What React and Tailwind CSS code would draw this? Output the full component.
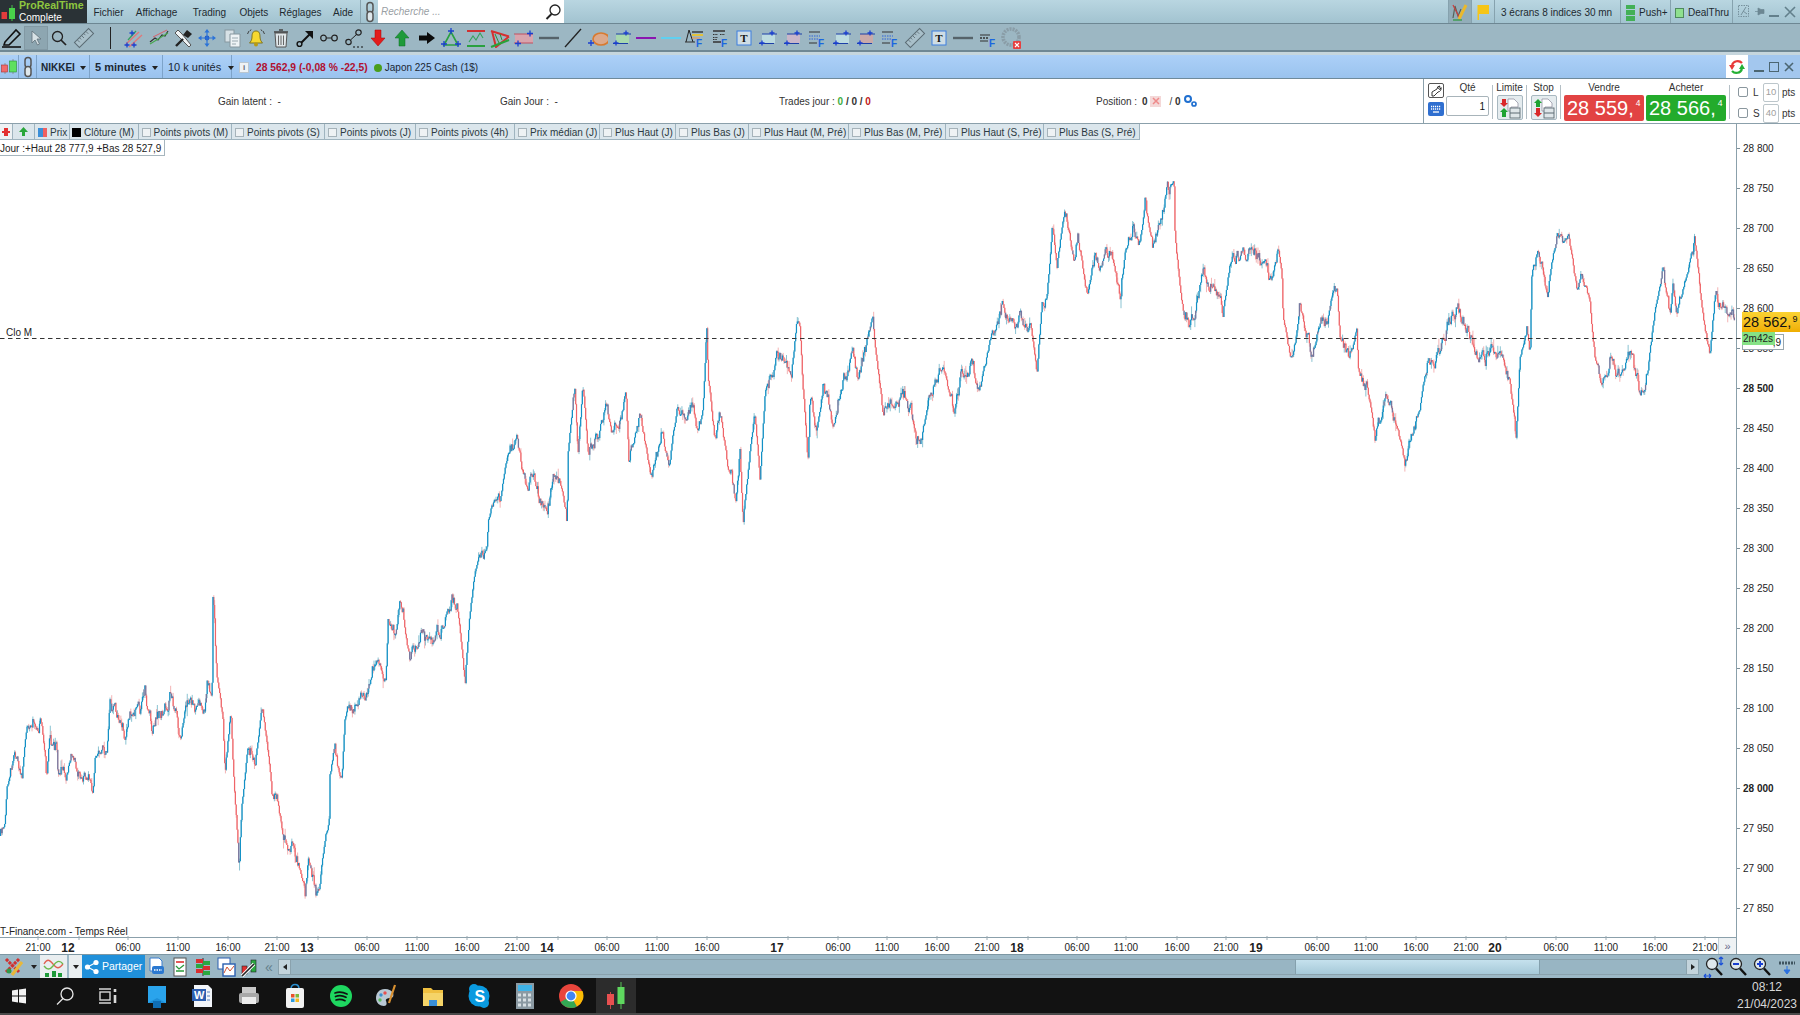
import React from "react";

const TRACE = [[0,837],[5,820],[7,790],[17,753],[22,770],[27,730],[35,720],[41,720],[45,750],[47,773],[50,747],[57,750],[58,768],[68,768],[73,753],[80,772],[88,770],[93,797],[95,760],[107,750],[110,703],[120,717],[124,732],[133,713],[140,717],[145,695],[152,730],[163,710],[170,697],[180,733],[188,700],[197,713],[205,707],[207,683],[212,703],[213,598],[217,680],[223,720],[225,773],[231,713],[233,767],[239,857],[242,807],[248,747],[255,760],[262,708],[268,750],[272,797],[278,803],[283,837],[297,857],[305,898],[308,867],[318,902],[325,840],[330,817],[328.5,787],[335,750],[342,783],[345,723],[348,702],[358,705],[368,697],[373,673],[380,660],[386,685],[388,623],[397,637],[400,613],[403,613],[410,663],[420,630],[430,652],[443,623],[452,600],[457,605],[463,657],[465,678],[470,613],[477,563],[487,547],[488.5,520],[500,500],[510,447],[517,440],[527,480],[533,470],[538,502],[547,507],[557,472],[566,510],[567,530],[568,453],[575,387],[578,453],[583,383],[588,453],[600,433],[606,407],[613,442],[626,393],[629,467],[640,415],[650,470],[655,473],[662,432],[669,470],[678,400],[687,423],[692,400],[698,440],[703,407],[707,320],[708,378],[715,440],[720,413],[728,470],[736,500],[740,450],[743,525],[750,453],[755,413],[760,477],[765,393],[768,377],[777,360],[792,365],[798,312],[800,327],[803,390],[808,457],[810,397],[816,433],[823,390],[833,418],[843,380],[853,357],[858,377],[868,347],[873,330],[880,387],[883,415],[895,397],[907,398],[920,442],[928,407],[942,362],[953,410],[960,383],[973,367],[978,402],[992,333],[1003,303],[1010,323],[1030,320],[1037,373],[1042,303],[1047,297],[1052,233],[1057,267],[1065,210],[1075,267],[1078,232],[1086,298],[1095,255],[1102,273],[1110,250],[1120,290],[1125,257],[1133,225],[1140,243],[1145,203],[1153,250],[1167,197],[1174,183],[1175,233],[1178,267],[1183,310],[1190,322],[1200,287],[1203,272],[1210,298],[1213,280],[1217,302],[1223,313],[1228,277],[1237,255],[1255,255],[1272,285],[1278,247],[1282,280],[1283,317],[1292,367],[1300,312],[1313,357],[1318,327],[1328,320],[1337,287],[1340,337],[1348,357],[1357,333],[1358,373],[1367,387],[1375,437],[1387,395],[1397,427],[1405,467],[1420,407],[1427,370],[1440,350],[1448,323],[1457,310],[1467,327],[1477,360],[1485,367],[1488,348],[1500,360],[1510,383],[1516,438],[1520,360],[1527,327],[1530,357],[1532,270],[1537,255],[1548,290],[1557,235],[1563,250],[1568,235],[1577,290],[1583,277],[1590,307],[1595,357],[1602,382],[1610,353],[1620,377],[1628,353],[1640,393],[1648,370],[1655,313],[1663,272],[1670,317],[1673,283],[1677,317],[1695,240],[1702,310],[1710,358],[1715,297],[1720,307],[1726,300],[1729,318],[1735,318]];

function buildCandles() {
  let seed = 12345;
  const rnd = () => {
    seed = (seed * 16807) % 2147483647;
    return seed / 2147483647;
  };
  const at = (x) => {
    for (let i = 1; i < TRACE.length; i++) {
      if (x <= TRACE[i][0]) {
        const [x0, y0] = TRACE[i - 1];
        const [x1, y1] = TRACE[i];
        return y0 + ((y1 - y0) * (x - x0)) / (x1 - x0 || 1);
      }
    }
    return TRACE[TRACE.length - 1][1];
  };
  let up = "", down = "", mix = "", upW = "", downW = "";
  let prev = at(0);
  let n = 0;
  for (let x = 0.5; x < 1735; x += 0.83) {
    n = n * 0.7 + (rnd() - 0.5) * 13;
    const slope = Math.abs(at(x + 3) - at(x - 3)) / 6;
    const damp = slope > 4 ? 0.4 : 1;
    const c = at(x) + n * damp;
    const o = prev;
    const top = Math.min(o, c);
    const bot = Math.max(o, c);
    const spread = slope > 4 ? 4 : 12;
    const hi = top - rnd() * rnd() * rnd() * spread;
    const lo = bot + rnd() * rnd() * rnd() * spread;
    const isUp = c <= o;
    const X = x.toFixed(2);
    const body = `M${X} ${top.toFixed(1)}V${Math.max(bot, top + 1.5).toFixed(1)}`;
    const wick = `M${X} ${hi.toFixed(1)}V${lo.toFixed(1)}`;
    const roll = rnd();
    if (roll < 0.24 && slope < 4) mix += body;
    else if (isUp) up += body;
    else down += body;
    if (isUp) upW += wick; else downW += wick;
    prev = c;
  }
  return { up, down, mix, upW, downW };
}
const C = buildCandles();

const TIMES = [["21:00",38],["12",68,1],["06:00",128],["11:00",178],["16:00",228],["21:00",277],["13",307,1],["06:00",367],["11:00",417],["16:00",467],["21:00",517],["14",547,1],["06:00",607],["11:00",657],["16:00",707],["17",777,1],["06:00",838],["11:00",887],["16:00",937],["21:00",987],["18",1017,1],["06:00",1077],["11:00",1126],["16:00",1177],["21:00",1226],["19",1256,1],["06:00",1317],["11:00",1366],["16:00",1416],["21:00",1466],["20",1495,1],["06:00",1556],["11:00",1606],["16:00",1655],["21:00",1705]];

const PRICES = Array.from({ length: 20 }, (_, i) => 28800 - i * 50);

const S = ({ w = 20, h = 20, children, className = "" }) => (
  <svg viewBox={`0 0 ${w} ${h}`} width={w} height={h} className={`block shrink-0 ${className}`}>{children}</svg>
);
const Plus = ({ x, y, c = "#1a3fd0", r = 3 }) => (
  <path d={`M${x - r} ${y}H${x + r}M${x} ${y - r}V${y + r}`} stroke={c} strokeWidth="1.3" fill="none" />
);
const Chain = () => (
  <S w={12} h={22}>
    <rect x="3" y="1.5" width="6" height="10" rx="3" fill="none" stroke="#555" strokeWidth="1.5" />
    <rect x="3" y="10.5" width="6" height="10" rx="3" fill="#dfe8ec" stroke="#555" strokeWidth="1.5" />
  </S>
);
const RectPlus = ({ fill }) => (
  <S>
    <rect x="4" y="6" width="13" height="9" fill={fill} />
    <path d="M1 15.5H16M4 6H19" stroke="#1c3fa8" strokeWidth="1" />
    <Plus x={14} y={5} r={2.5} />
    <Plus x={4} y={15} r={2.5} />
  </S>
);
const FibF = ({ children }) => (
  <S>
    {children}
    <text x="11" y="19" fontSize="10" fontWeight="700" fill="#1a66e0" fontFamily="Liberation Sans">F</text>
  </S>
);
const BoxT = () => (
  <S>
    <rect x="3" y="3" width="14" height="14" fill="#cfdde4" stroke="#3d7fe0" strokeWidth="1" />
    <text x="6.3" y="14" fontSize="11" fontWeight="700" fill="#111" fontFamily="Liberation Serif">T</text>
  </S>
);
const Line = ({ c, w = 2 }) => (
  <S>
    <path d="M0 10H20" stroke={c} strokeWidth={w} />
  </S>
);
const Ruler = () => (
  <S w={22} h={22}>
    <g transform="rotate(-45 11 11)">
      <rect x="1" y="7.5" width="20" height="7" fill="#a9c0ca" stroke="#5b6c74" strokeWidth="1" />
      <path d="M5 8v3M8 8v2M11 8v3M14 8v2M17 8v3" stroke="#5b6c74" strokeWidth=".8" />
    </g>
  </S>
);

const TOOLS = [
  <S><path d="M2 16L15 4M5 19L18 7" stroke="#e0787a" strokeWidth="1.4" /><path d="M4 12L12 3" stroke="#35a060" strokeWidth="1.3" /><Plus x={8} y={5} r={2.5} /><Plus x={3} y={17} r={2.5} /><Plus x={10} y={17} r={2.5} /></S>,
  <S><path d="M1 14L6 10L9 12L13 7L16 8L19 3" stroke="#333" strokeWidth="1.2" fill="none" /><path d="M1 16L19 5" stroke="#47a84f" strokeWidth="1.2" /><path d="M4 9L18 2" stroke="#d8606a" strokeWidth="1" /></S>,
  <S><path d="M5 2L9 6L18 17L16 19L6 9L2 5Z" fill="#eef3f5" stroke="#555" strokeWidth="1" /><path d="M10 7L14 2L19 6L15 10Z" fill="#222" /><path d="M10 11L3 18" stroke="#222" strokeWidth="2.4" /></S>,
  <S><circle cx="10" cy="10" r="2.4" fill="#1f56c8" /><path d="M10 1L12.6 4.5H7.4ZM10 19L7.4 15.5H12.6ZM1 10L4.5 7.4V12.6ZM19 10L15.5 12.6V7.4Z" fill="#2b73d8" /><path d="M10 4V16M4 10H16" stroke="#2b73d8" strokeWidth="1.2" /></S>,
  <S><rect x="3" y="2" width="9" height="12" fill="#d7e1e6" stroke="#86979f" /><path d="M8 6H18V19H8Z" fill="#eef3f5" stroke="#86979f" /><path d="M10 10H16M10 13H16M10 16H14" stroke="#9aa9b0" /></S>,
  <S><path d="M10 3C6.5 3 6 6 6 9C6 12 4.5 14 3.5 15H16.5C15.5 14 14 12 14 9C14 6 13.5 3 10 3Z" fill="#f6d831" stroke="#776d1a" strokeWidth=".9" /><circle cx="10" cy="16.5" r="2" fill="#b89a12" /><path d="M3 3L1.5 6M5 1.5L4 3M17 3L18.5 6M15 1.5L16 3" stroke="#333" strokeWidth=".9" /></S>,
  <S><path d="M4 5H16L15 19H5Z" fill="#dfe6e9" stroke="#555" /><path d="M3 4H17M8 2H12" stroke="#444" strokeWidth="1.5" /><path d="M7.5 7.5V17M10 7.5V17M12.5 7.5V17" stroke="#666" strokeWidth="1" /></S>,
  <S><path d="M4 17L15 6" stroke="#111" strokeWidth="2" /><circle cx="4.5" cy="16" r="2.4" fill="#9eb8c4" stroke="#111" strokeWidth="1.4" /><path d="M10 3H18V11Z" fill="#111" /></S>,
  <S><circle cx="4.5" cy="10" r="2.8" fill="none" stroke="#222" strokeWidth="1.2" /><circle cx="15.5" cy="10" r="2.8" fill="none" stroke="#222" strokeWidth="1.2" /><path d="M7.3 10H12.7" stroke="#222" /></S>,
  <S><circle cx="4.5" cy="14" r="2.7" fill="none" stroke="#222" strokeWidth="1.2" /><circle cx="14.5" cy="4.5" r="2.7" fill="none" stroke="#222" strokeWidth="1.2" /><path d="M6.5 12L12.5 6.5" stroke="#222" /><path d="M9 19H11M13 19H15M17 19H19" stroke="#111" strokeWidth="1.2" /></S>,
  <S><path d="M7 2H13V10H17L10 18L3 10H7Z" fill="#e31c1c" stroke="#a80000" strokeWidth=".5" /></S>,
  <S><path d="M7 18H13V10H17L10 2L3 10H7Z" fill="#1f9a3a" stroke="#0f6d24" strokeWidth=".5" /></S>,
  <S><path d="M2 7.5H10V4L18 10L10 16V12.5H2Z" fill="#0b0b0b" /></S>,
  <S><path d="M10 4L3 17H17Z" fill="none" stroke="#2aa040" strokeWidth="1.6" /><Plus x={10} y={3} r={3} /><Plus x={3} y={16} r={3} /><Plus x={17} y={16} r={3} /></S>,
  <S><path d="M1 3H19" stroke="#d03030" strokeWidth="2" /><path d="M1 18H19" stroke="#2aa040" strokeWidth="2" /><path d="M3 14L7 8L10 12L14 5L17 10" stroke="#35a35a" strokeWidth="1.1" fill="none" /></S>,
  <S><path d="M1 3L19 8.5M2 3L6 19L19 8.5" stroke="#d53030" strokeWidth="2" fill="none" /><path d="M1 19L19 12" stroke="#28a23a" strokeWidth="2" /><path d="M5 6L9 15M10 6L12 12" stroke="#2a8f3a" strokeWidth="1" /></S>,
  <S><rect x="1" y="6" width="18" height="9" fill="#d8a4ad" /><path d="M0 6H19M0 15H19" stroke="#c05060" strokeWidth="1" /><Plus x={16} y={5.5} r={3} /><Plus x={4} y={15.5} r={3} /></S>,
  <Line c="#56636a" w={2.4} />,
  <S><path d="M2 19L18 1" stroke="#222" strokeWidth="1.3" /></S>,
  <S><ellipse cx="13" cy="11" rx="8" ry="6" fill="#dca98c" stroke="#d97a30" strokeWidth="1.6" /><Plus x={3} y={15} r={3} /></S>,
  <RectPlus fill="#a8d8ae" />,
  <Line c="#8a16b0" />,
  <Line c="#5fd0f0" />,
  <FibF><path d="M4 2L1 14M4 2L8 14" stroke="#222" strokeWidth="1" fill="none" /><path d="M7 4H18" stroke="#333" strokeWidth="1.4" /><path d="M7 7H18" stroke="#e3c23a" strokeWidth="2" /><path d="M7 10H15" stroke="#e89a5a" strokeWidth="1.2" /><path d="M0 14H10" stroke="#333" strokeWidth="1" /></FibF>,
  <FibF><path d="M3 3H15M3 14H11" stroke="#333" strokeWidth="1.4" /><path d="M3 6.5H8M10 6.5H15M3 9.5H8M3 11.5H7" stroke="#333" strokeWidth="1.2" strokeDasharray="1.5 .8" /></FibF>,
  <BoxT />,
  <RectPlus fill="#bcdbe0" />,
  <RectPlus fill="#c9b6c9" />,
  <FibF><path d="M2 4H13M2 15H10" stroke="#333" strokeWidth="1.2" /><path d="M2 8H13M2 11H11" stroke="#2f63d8" strokeWidth="1" strokeDasharray="1.5 1" /></FibF>,
  <RectPlus fill="#bcdbe0" />,
  <RectPlus fill="#c9a9a9" />,
  <FibF><path d="M2 4H13M2 15H10" stroke="#333" strokeWidth="1.2" /><path d="M2 8H13M2 11H11" stroke="#2f63d8" strokeWidth="1" strokeDasharray="1.5 1" /></FibF>,
  <Ruler />,
  <BoxT />,
  <Line c="#56636a" w={2.4} />,
  <FibF><path d="M2 7H12M2 13H10" stroke="#333" strokeWidth="1.2" /><path d="M2 10H10" stroke="#333" strokeWidth="1.4" strokeDasharray="2 1" /></FibF>,
  <S w={22} h={24}><circle cx="10" cy="11" r="8" fill="none" stroke="#8a9da7" strokeWidth="3.6" strokeDasharray="2 1" /><rect x="12" y="15" width="8" height="8" rx="1" fill="#e64040" /><path d="M14 17L18 21M18 17L14 21" stroke="#fff" strokeWidth="1.2" /></S>,
];

const TABS = [
  ["Points pivots (M)", "w-[93.5px]"], ["Points pivots (S)", "w-[93px]"], ["Points pivots (J)", "w-[91px]"], ["Points pivots (4h)", "w-[99px]"], ["Prix médian (J)", "w-[85px]"],
  ["Plus Haut (J)", "w-[76px]"], ["Plus Bas (J)", "w-[73px]"], ["Plus Haut (M, Pré)", "w-[100px]"], ["Plus Bas (M, Pré)", "w-[97px]"], ["Plus Haut (S, Pré)", "w-[98px]"], ["Plus Bas (S, Pré)", "w-[96px]"],
];

const Caret = () => <div className="w-0 h-0 border-x-[3.5px] border-x-transparent border-t-[4px] border-t-[#222]" />;

const WinBtns = ({ c = "#4c6672" }) => (
  <S w={10} h={10}><path d="M1 1L9 9M9 1L1 9" stroke={c} strokeWidth="1.6" /></S>
);

const TopBar = () => (
  <div className="h-[24px] flex shrink-0 items-stretch bg-gradient-to-b from-[#b9d6e1] to-[#a2c3d0] border-b border-[#6d8793] text-[10px] text-[#1d2a30]">
    <div className="w-[87px] bg-[#2a3236] flex items-center">
      <S w={19} h={22}>
        <rect x="1.5" y="11" width="5.5" height="7" fill="#e23c3c" />
        <path d="M12 4V20" stroke="#46c04a" />
        <rect x="9" y="7" width="6" height="11" fill="#48d04a" />
      </S>
      <div className="flex flex-col leading-[11.5px]">
        <span className="text-[#8ec63f] font-bold text-[10.6px]">ProRealTime</span>
        <span className="text-white text-[10px]">Complete</span>
      </div>
    </div>
    <div className="flex items-center pl-[6.5px] pt-[2px] w-[273px]">
      <span className="w-[42.5px]">Fichier</span>
      <span className="w-[57px]">Affichage</span>
      <span className="w-[47px]">Trading</span>
      <span className="w-[40px]">Objets</span>
      <span className="w-[54px]">Réglages</span>
      <span className="w-[27px]">Aide</span>
    </div>
    <div className="w-[18px] flex items-center justify-center border-l border-[#8aa6b2]"><Chain /></div>
    <div className="w-[186px] bg-white flex items-center justify-between pl-[3px] pr-[2px]">
      <span className="italic text-[#9aa0a4]">Recherche ...</span>
      <S w={18} h={18}><circle cx="11" cy="7" r="5" fill="#fff" stroke="#222" strokeWidth="1.3" /><path d="M7.5 11L2.5 16" stroke="#222" strokeWidth="2" /></S>
    </div>
    <div className="flex-1" />
    <div className="w-[24px] bg-[#92adb9] flex items-center justify-center border-x border-[#86a2ae]">
      <S w={18} h={20}>
        <path d="M2 16L4 4L7 14L10 7" stroke="#56635a" strokeWidth="1.2" fill="none" />
        <path d="M2 3L8 15" stroke="#c84040" strokeWidth="1.2" />
        <path d="M8 17L15 3" stroke="#eab92c" strokeWidth="3" />
        <path d="M2 18H11" stroke="#2c9a3a" strokeWidth="1.2" />
      </S>
    </div>
    <div className="w-[23px] flex items-center justify-center border-r border-[#86a2ae]">
      <S w={16} h={18}><path d="M2.5 2H14V11H4V17H2.5Z" fill="#f5c518" /></S>
    </div>
    <div className="w-[126px] flex items-center pl-[6px] pt-[2px] border-r border-[#86a2ae]">3 écrans 8 indices 30 mn</div>
    <div className="w-[50px] flex items-center pl-[5px] pt-[2px] gap-[4px] border-r border-[#86a2ae]">
      <div className="w-[9px] h-[16px] flex flex-col gap-[1px]">
        <div className="flex-1 bg-[#43b056]" /><div className="flex-1 bg-[#43b056]" /><div className="flex-1 bg-[#43b056]" />
      </div>
      <span>Push+</span>
    </div>
    <div className="w-[62px] flex items-center pl-[4px] pt-[2px] gap-[4px] border-r border-[#86a2ae]">
      <div className="w-[9px] h-[10px] bg-[#8fe08f] border border-[#4f8a5e]" />
      <span>DealThru</span>
    </div>
    <div className="w-[67px] flex items-center pl-[5px]">
      <S w={12} h={13}><rect x=".5" y=".5" width="10" height="11" fill="none" stroke="#76909c" strokeDasharray="1.5 1" /><path d="M3 10L8 2M5 6L9 9" stroke="#76909c" /></S>
      <div className="ml-[4px] w-[12px]"><S w={11} h={9}><path d="M1 4.5H4M4 1V8L7 6.5H10V2.5H7Z" fill="#6c8793" stroke="#6c8793" strokeWidth=".7" /></S></div>
      <div className="ml-[3px] w-[10px] h-[2px] mt-[8px] bg-[#63808c]" />
      <div className="ml-[5px]"><S w={12} h={12}><path d="M1 1L11 11M11 1L1 11" stroke="#63808c" strokeWidth="1.6" /></S></div>
    </div>
  </div>
);

const ToolBar = () => (
  <div className="h-[28px] flex shrink-0 items-center bg-[#9cb7c3] border-b-2 border-[#6f8894] pt-[2px]">
    <div className="w-[24px] flex justify-center">
      <S w={22} h={22}><path d="M4 15L15 3L19 7L8 18H3Z" fill="none" stroke="#111" strokeWidth="1.6" /><path d="M1 20H20" stroke="#111" strokeWidth="1.6" /></S>
    </div>
    <div className="w-[24px] h-[24px] bg-[#8da6b1] border border-[#8299a4] flex items-center justify-center">
      <S w={14} h={16}><path d="M3 1V13L6 10L8.5 15L10.5 14L8 9H12Z" fill="#d8e2e6" stroke="#5f7079" strokeWidth=".8" /></S>
    </div>
    <div className="w-[22px] flex justify-center">
      <S w={18} h={18}><circle cx="7.5" cy="7.5" r="5" fill="none" stroke="#222" strokeWidth="1.3" /><path d="M11 11L16 16" stroke="#222" strokeWidth="1.7" /></S>
    </div>
    <div className="w-[28px] flex justify-center"><Ruler /></div>
    <div className="w-[24px] flex justify-center"><div className="w-[1px] h-[22px] bg-[#222]" /></div>
    {TOOLS.map((t, i) => (
      <div key={i} className="w-[24.4px] shrink-0 flex justify-center">{t}</div>
    ))}
  </div>
);

const BlueCell = ({ className, children }) => (
  <div className={`flex items-center whitespace-nowrap border-r border-[#7da3c9] ${className}`}>{children}</div>
);

const BlueBar = () => (
  <div className="h-[24px] shrink-0 flex items-stretch bg-gradient-to-b from-[#acd0f8] to-[#9ac3ee] border-b border-[#6f8a9a] text-[10px] text-[#1b2733]">
    <BlueCell className="w-[19px] justify-center">
      <S w={18} h={20}>
        <path d="M5 6V17M13 2V17" stroke="#888" strokeWidth=".8" />
        <rect x="1.5" y="8" width="6" height="7" fill="#f06a6a" stroke="#a33" strokeWidth=".6" />
        <rect x="9.5" y="4" width="7" height="11" fill="#5fe05f" stroke="#2a8a3a" strokeWidth=".6" />
      </S>
    </BlueCell>
    <BlueCell className="w-[18px] justify-center"><Chain /></BlueCell>
    <BlueCell className="w-[53px] pl-[4px] pt-[2px] gap-[5px] font-bold"><span>NIKKEI</span><Caret /></BlueCell>
    <BlueCell className="w-[73px] pl-[5px] pt-[2px] gap-[6px] font-bold text-[11px]"><span>5 minutes</span><Caret /></BlueCell>
    <BlueCell className="w-[69px] pl-[5px] pt-[2px] gap-[7px] text-[11px]"><span>10 k unités</span><Caret /></BlueCell>
    <div className="flex items-center pl-[7px] pt-[2px]">
      <div className="w-[10px] h-[11px] bg-[#eef2f5] border border-[#b9c6d0] flex items-center justify-center text-[8px] text-[#667] font-bold leading-none">i</div>
      <span className="ml-[7px] w-[118px] text-[#b01030] font-bold text-[10.3px] whitespace-nowrap">28 562,9 (-0,08 % -22,5)</span>
      <div className="w-[8px] h-[8px] rounded-full bg-[#4a9e1c]" />
      <span>&nbsp;Japon 225 Cash (1$)</span>
    </div>
    <div className="flex-1" />
    <div className="w-[22px] bg-white flex items-center justify-center">
      <S w={18} h={20}>
        <path d="M14 6A6 6 0 0 0 4 8" stroke="#e83a3a" strokeWidth="2.2" fill="none" />
        <path d="M1 8H7L4 13Z" fill="#e83a3a" />
        <path d="M4 14A6 6 0 0 0 14 12" stroke="#23b035" strokeWidth="2.2" fill="none" />
        <path d="M11 12H17L14 7Z" fill="#23b035" />
      </S>
    </div>
    <div className="w-[52px] bg-[#a3c7ee] flex items-center justify-end pr-[6px] gap-[5px]">
      <div className="w-[10px] h-[2px] bg-[#4c6672] mt-[8px]" />
      <div className="w-[10px] h-[10px] border border-[#4c6672]" />
      <WinBtns />
    </div>
  </div>
);

const OrderIcon = ({ flip }) => (
  <div className="w-[26px] h-[25px] rounded-[2px] border border-[#a8b8c0] bg-[#e5ecef] flex items-center justify-center">
    <S w={22} h={22}>
      <path d="M9 2H15L19 6V10H12V14H9Z" fill="#fff" stroke="#889" strokeWidth=".7" />
      <rect x="11" y="11" width="10" height="10" fill="#dfe6e9" stroke="#5c6a72" strokeWidth=".9" />
      <path d="M11 16H21" stroke="#5c6a72" />
      <path d="M3 2H7V6H9L5 10L1 6H3Z" fill={flip ? "#1fa333" : "#d92a2a"} transform={flip ? "rotate(180 5 6)" : ""} />
      <path d="M5 11L9 15H7V20H3V15H1Z" fill={flip ? "#d92a2a" : "#1fa333"} transform={flip ? "rotate(180 5 15.5)" : ""} />
    </S>
  </div>
);

const Sep = () => <div className="w-[1px] h-[34px] bg-[#b4bfc5] self-center mx-[3px]" />;

const BuySell = ({ label, int, sup, bg, w }) => (
  <div className={`flex flex-col items-center ${w}`}>
    <span className="h-[14px] leading-[14px]">{label}</span>
    <div className={`w-full h-[26px] rounded-[2px] flex items-center pl-[3px] text-white whitespace-nowrap ${bg}`}>
      <span className="text-[20px] leading-none">{int}</span>
      <span className="text-[8.5px] self-start mt-[2px] ml-[2px]">{sup}</span>
    </div>
  </div>
);

const Stat = ({ className, children }) => <div className={`flex items-center ${className}`}>{children}</div>;

const GainRow = () => (
  <div className="h-[45px] shrink-0 flex bg-white border-b border-[#8ba0ab] text-[10px] text-[#333]">
    <Stat className="w-[500px] pl-[218px]">Gain latent :&nbsp; -</Stat>
    <Stat className="w-[279px]">Gain Jour :&nbsp; -</Stat>
    <Stat className="w-[317px]">Trades jour :&nbsp;<b className="text-[#3fae3f]">0</b>&nbsp;<b>/</b>&nbsp;<b>0</b>&nbsp;<b>/</b>&nbsp;<b className="text-[#c02020]">0</b></Stat>
    <Stat className="w-[327px]">
      Position :&nbsp; <b className="ml-[2px]">0</b>
      <div className="ml-[3px] w-[11px] h-[11px] bg-[#f4d8d8] flex items-center justify-center"><S w={8} h={8}><path d="M1 1L7 7M7 1L1 7" stroke="#ee8a8a" strokeWidth="1.5" /></S></div>
      <span className="ml-[8px]">/ <b>0</b></span>
      <S w={14} h={14} className="ml-[2px]"><circle cx="5" cy="5" r="3" fill="none" stroke="#1f6fd0" strokeWidth="2" /><circle cx="11" cy="10" r="2" fill="none" stroke="#1f6fd0" strokeWidth="1.7" /></S>
    </Stat>
    <div className="flex-1 border-l border-[#8ba0ab] flex pl-[3px] pt-[2px] text-[#333]">
      <div className="w-[17px] flex flex-col items-center gap-[4px] pt-[2px]">
        <div className="w-[16px] h-[15px] rounded-[2px] border border-[#555] flex items-center justify-center">
          <S w={12} h={12}><path d="M2 11L2 7L7 4A3 3 0 0 1 10 1L8.5 3.5L10 4.5L11 2.5A3.5 3.5 0 0 1 8 7L4 11Z" fill="#fff" stroke="#222" strokeWidth=".9" /></S>
        </div>
        <div className="w-[16px] h-[14px] rounded-[2px] bg-[#2f6fd0] flex items-center justify-center">
          <S w={12} h={9}><path d="M1 1.5H11M1 4H11" stroke="#fff" strokeWidth="1.4" strokeDasharray="1.2 .8" /><path d="M3 7H9" stroke="#fff" strokeWidth="1.3" /></S>
        </div>
      </div>
      <div className="w-[43px] ml-[2px] flex flex-col items-center">
        <span className="h-[14px] leading-[14px]">Qté</span>
        <div className="w-full h-[20px] mt-[1px] rounded-[2px] border border-[#a8b4ba] flex items-center justify-end pr-[3px] text-[#111]">1</div>
      </div>
      <Sep />
      <div className="w-[27px] flex flex-col items-center">
        <span className="h-[14px] leading-[14px]">Limite</span>
        <OrderIcon />
      </div>
      <Sep />
      <div className="w-[27px] flex flex-col items-center">
        <span className="h-[14px] leading-[14px]">Stop</span>
        <OrderIcon flip />
      </div>
      <Sep />
      <BuySell label="Vendre" int="28 559," sup="4" bg="bg-[#e24343]" w="w-[80px]" />
      <div className="w-[2px]" />
      <BuySell label="Acheter" int="28 566," sup="4" bg="bg-[#23ab2c]" w="w-[80px]" />
      <Sep />
      <div className="flex-1 flex flex-col pl-[5px] pt-[1px] gap-[1px]">
        {[["L", "10"], ["S", "40"]].map(([l, v]) => (
          <div key={l} className="h-[20px] flex items-center">
            <div className="w-[10px] h-[10px] rounded-[2px] border border-[#8a979e]" />
            <span className="ml-[5px] w-[10px]">{l}</span>
            <div className="w-[16px] h-[19px] rounded-[2px] border border-[#bcc6cb] flex items-center justify-center text-[#a0a0a0] text-[9.5px]">{v}</div>
            <span className="ml-[3px]">pts</span>
          </div>
        ))}
      </div>
    </div>
  </div>
);

const Check = () => <div className="w-[9px] h-[9px] bg-[#eef2f4] border border-[#a6b3ba] mr-[3px] shrink-0" />;

const Tabs = () => (
  <div className="relative flex h-[16px] w-fit text-[10px] text-[#2c3a42] bg-[#dbe6ec] border-b border-[#9fb4bf]">
    <div className="w-[13px] flex items-center justify-center border-r border-[#9fb4bf] bg-[#eef2f4]">
      <S w={10} h={10}><path d="M1 4H3V1H7V4H9V6H7V9H3V6H1Z" fill="#e23030" /></S>
    </div>
    <div className="w-[22px] flex items-center justify-center border-r border-[#9fb4bf]">
      <S w={11} h={11}><path d="M5.5 1L10 6H7V10H4V6H1Z" fill="#2aa63a" /></S>
    </div>
    <div className="w-[35px] flex items-center pl-[3px] pt-[1px] border-r border-[#9fb4bf]">
      <div className="w-[9px] h-[9px] mr-[3px] bg-gradient-to-r from-[#3b8fd8] from-50% to-[#f06060] to-50%" />Prix
    </div>
    <div className="w-[68.5px] flex items-center pl-[2px] pt-[1px] border-r border-[#9fb4bf]">
      <div className="w-[9px] h-[9px] mr-[3px] bg-black" />Clôture (M)
    </div>
    {TABS.map(([t, w]) => (
      <div key={t} className={`${w} flex items-center pl-[3px] pt-[1px] border-r border-[#9fb4bf] whitespace-nowrap`}>
        <Check />{t}
      </div>
    ))}
  </div>
);

const Plot = () => (
  <svg viewBox="0 125 1736 829" width="1736" height="829" className="absolute left-0 top-0 overflow-visible z-10 pointer-events-none">
    <path d={C.upW} stroke="#7dbccd" strokeWidth=".9" fill="none" />
    <path d={C.downW} stroke="#f2aaac" strokeWidth=".9" fill="none" />
    <path d={C.down} stroke="#ef6468" strokeWidth="1.2" fill="none" />
    <path d={C.up} stroke="#1290c6" strokeWidth="1.2" fill="none" />
    <path d={C.mix} stroke="#77779e" strokeWidth="1.3" fill="none" />
    <path d="M0 339.5H1741" stroke="#333" strokeWidth="1" strokeDasharray="4.5 3.5" />
    {TIMES.map(([_, x, d], i) => (
      <path key={i} d={`M${d ? x + 11 : x} 937V941`} stroke="#9aa9b1" strokeWidth="1" />
    ))}
  </svg>
);

const Chart = () => (
  <div className="flex-1 flex min-h-0 bg-white text-[10px] text-[#222]">
    <div className="relative flex-1 flex flex-col min-w-0">
      <Plot />
      <Tabs />
      <div className="relative w-fit h-[16px] pr-[3px] pt-[1px] flex items-center bg-white border-r border-b border-[#a7b6be] whitespace-nowrap">Jour :+Haut 28 777,9 +Bas 28 527,9</div>
      <span className="absolute left-[6px] top-[201px]">Clo M</span>
      <div className="flex-1" />
      <div className="h-[12px] leading-[14px] whitespace-nowrap">T-Finance.com - Temps Réel</div>
      <div className="relative h-[17px] border-t border-[#8ba0ab]">
        {TIMES.map(([t, x, d], i) => (
          <span
            key={i}
            className={`absolute top-[3px] -translate-x-1/2 leading-[14px] ${d ? "font-bold text-[12px]" : "text-[10px]"}`}
            style={{ left: x }}
          >{t}</span>
        ))}
        <div className="absolute right-0 top-0 bottom-0 w-[18px] bg-[#eef2f4] flex items-center justify-center text-[#668] text-[11px] leading-none border-l border-[#c4d0d6]">»</div>
      </div>
    </div>
    <div className="relative w-[64px] shrink-0 border-l border-[#8ba0ab]">
      {PRICES.map((p, i) => {
        const s = String(p);
        return (
          <div key={p} className="absolute left-0 flex items-center h-[12px]" style={{ top: 24 + i * 40 - 6 }}>
            <div className="w-[3px] h-[1px] bg-[#7d8f98] mr-[3px]" />
            <span className={p % 500 === 0 ? "font-bold" : ""}>{s.slice(0, 2)} {s.slice(2)}</span>
          </div>
        );
      })}
      <div className="absolute left-[5px] top-[210px] w-[42px] h-[16px] bg-white border border-[#9aa7ae] flex items-center justify-end pr-[2px]">,9</div>
      <div className="absolute left-[5px] top-[188px] w-[58px] h-[20px] z-20 bg-gradient-to-b from-[#fbd331] to-[#efae00] flex items-center pl-[1px] text-[#111]">
        <span className="text-[14.5px] leading-none">28 562,</span>
        <span className="text-[9px] self-start mt-[1px] ml-[1px]">9</span>
      </div>
      <div className="absolute left-[5px] top-[208px] w-[33px] h-[13px] z-20 bg-[#86e286] flex items-center pl-[1px] text-[#222] leading-none">2m42s</div>
    </div>
  </div>
);

const Mag = ({ children }) => (
  <S w={22} h={22}>
    <circle cx="9" cy="8" r="5.5" fill="#dfe8ec" stroke="#222" strokeWidth="1.3" />
    <path d="M13 12.5L19 19" stroke="#111" strokeWidth="2.4" />
    {children}
  </S>
);

const Bottom = () => (
  <div className="h-[24px] shrink-0 flex items-center bg-[#9cb8c6] border-t border-[#7d97a3] text-[10px]">
    <div className="w-[27px] flex items-center justify-center">
      <S w={22} h={22}>
        <path d="M3 3L16 16M16 3L3 16" stroke="#d03030" strokeWidth="3" strokeDasharray="3 1" />
        <path d="M9 19L19 6" stroke="#e8b83a" strokeWidth="3" />
        <circle cx="6" cy="15" r="2.5" fill="#2f9a4a" />
      </S>
    </div>
    <div className="w-[13px] flex justify-center"><Caret /></div>
    <div className="w-[27px] h-full bg-[#e9eef0] flex items-center justify-center">
      <S w={22} h={22}>
        <path d="M1 8C4 3 6 3 10 8S16 13 20 8" stroke="#e06050" strokeWidth="1.3" fill="none" />
        <path d="M1 10C4 14 7 14 10 10S16 3 20 8" stroke="#6ab94a" strokeWidth="1.3" fill="none" />
        <rect x="2" y="17" width="4" height="4" fill="#1f9a3a" />
        <rect x="9" y="15" width="4" height="6" fill="#1f9a3a" />
        <rect x="15" y="17" width="4" height="4" fill="#1f9a3a" />
      </S>
    </div>
    <div className="w-[13px] h-full bg-[#e9eef0] ml-[2px] flex items-center justify-center"><Caret /></div>
    <div className="w-[63px] h-full bg-[#2090da] flex items-center pl-[2px] text-white text-[10.5px]">
      <S w={15} h={16}><circle cx="3.5" cy="8" r="2.6" fill="#fff" /><circle cx="12" cy="3.5" r="2.6" fill="#fff" /><circle cx="12" cy="12.5" r="2.6" fill="#fff" /><path d="M3.5 8L12 3.5M3.5 8L12 12.5" stroke="#fff" strokeWidth="1.2" /></S>
      <span className="ml-[3px]">Partager</span>
    </div>
    <div className="w-[23px] flex justify-center">
      <S><path d="M3 1H12L15 4V14H3Z" fill="#fff" stroke="#3a7fd0" /><rect x="5" y="9" width="12" height="8" rx="2" fill="#2a78d0" /><path d="M7 13H15" stroke="#fff" strokeWidth="1.4" strokeDasharray="1.5 1" /></S>
    </div>
    <div className="w-[23px] flex justify-center">
      <S><rect x="4" y="1" width="12" height="18" fill="#fff" stroke="#555" /><path d="M6 5H14" stroke="#e03030" strokeWidth="1.6" /><path d="M6 9L9 12L14 8M6 14H14" stroke="#2a9a3a" strokeWidth="1.3" fill="none" /></S>
    </div>
    <div className="w-[23px] flex justify-center">
      <S>
        <path d="M10 1V19" stroke="#333" />
        {[[2,"#d83030"],[7,"#2aa840"],[12,"#d83030"]].map(([y,c]) => <rect key={y} x="3" y={y} width="7" height="4" fill={c} />)}
        {[[4,"#2aa840"],[9,"#d83030"],[14,"#2aa840"]].map(([y,c]) => <rect key={y} x="10" y={y} width="7" height="4" fill={c} />)}
      </S>
    </div>
    <div className="w-[23px] flex justify-center">
      <S><rect x="2" y="1" width="12" height="11" fill="#fff" stroke="#2a5fb0" /><rect x="7" y="7" width="12" height="12" fill="#fff" stroke="#2a5fb0" strokeWidth="1.4" /><path d="M8 16L11 10L14 14L18 9" stroke="#d05030" fill="none" /></S>
    </div>
    <div className="w-[23px] flex justify-center">
      <S>
        <rect x="3" y="9" width="5" height="8" fill="#e03030" stroke="#222" strokeWidth=".6" />
        <rect x="12" y="3" width="5" height="12" fill="#2aa840" stroke="#222" strokeWidth=".6" />
        <path d="M3 19L15 7" stroke="#fff" strokeWidth="3.4" />
        <path d="M3 19L15 7" stroke="#222" strokeWidth="1.6" />
      </S>
    </div>
    <div className="w-[18px] text-center text-[#64808c] text-[14px] leading-none">«</div>
    <div className="w-[13px] h-[16px] bg-[#c3d4dc] border border-[#8aa2ad] flex items-center justify-center">
      <div className="w-0 h-0 border-y-[3.5px] border-y-transparent border-r-[4px] border-r-[#222]" />
    </div>
    <div className="w-[1395px] h-[16px] border-y border-[#8aa2ad] flex bg-[#98b5c3]">
      <div className="w-[1004px]" />
      <div className="w-[245px] bg-gradient-to-b from-[#c5e1ed] to-[#a6c9d9] border-x border-[#84a0ad]" />
    </div>
    <div className="w-[13px] h-[16px] bg-[#c3d4dc] border border-[#8aa2ad] flex items-center justify-center">
      <div className="w-0 h-0 border-y-[3.5px] border-y-transparent border-l-[4px] border-l-[#222]" />
    </div>
    <div className="flex-1 flex items-center pl-[4px] gap-[2px]">
      <Mag><path d="M1 20H8M1 20L3 18M1 20L3 22M8 20L6 18M8 20L6 22M18 1V9M18 1L16 3M18 1L20 3M18 9L16 7M18 9L20 7" stroke="#1a4fd8" strokeWidth="1.2" fill="none" /></Mag>
      <Mag><path d="M6 8H12" stroke="#1a3fd0" strokeWidth="2" /></Mag>
      <Mag><path d="M6 8H12M9 5V11" stroke="#1a3fd0" strokeWidth="2" /></Mag>
      <S w={18} h={18} className="ml-[3px]"><path d="M1 5H17" stroke="#3f5560" strokeWidth="3" strokeDasharray="2 1" /><path d="M9 8V13M6 12H12L9 16Z" fill="#2a70e0" stroke="#2a70e0" /></S>
    </div>
  </div>
);

const TB = ({ className = "", children }) => (
  <div className={`w-[46px] h-full shrink-0 flex items-center justify-center ${className}`}>{children}</div>
);

const Taskbar = () => (
  <div className="h-[37px] shrink-0 flex items-stretch bg-[#121212] border-b-2 border-[#4a4a4a] text-[#d8d8d8] text-[12px]">
    <TB className="-ml-[4px]"><S w={20} h={20}><path d="M3 4.5L9 3.6V9.5H3ZM10 3.4L17 2.4V9.5H10ZM3 10.5H9V16.4L3 15.5ZM10 10.5H17V17.6L10 16.6Z" fill="#f2f2f2" /></S></TB>
    <TB><S w={20} h={20}><circle cx="12" cy="8" r="6" fill="none" stroke="#e6e6e6" strokeWidth="1.3" /><path d="M8 12.5L2 18.5" stroke="#e6e6e6" strokeWidth="1.3" /></S></TB>
    <TB className="-ml-[3px]"><S w={20} h={20}><path d="M1 3H13M1 17H13" stroke="#d8d8d8" strokeWidth="1.4" /><rect x="2" y="6" width="10" height="8" fill="none" stroke="#d8d8d8" strokeWidth="1.4" /><path d="M17 3V6M17 9V17" stroke="#d8d8d8" strokeWidth="2.6" /></S></TB>
    <TB className="ml-[3px]"><S w={24} h={26}><path d="M3 3H21V20H3Z" fill="#1d8fd8" /><path d="M3 3H21V20L12 15L3 20Z" fill="#2aa4ec" /><path d="M8 18H16V25H8Z" fill="#0f6eb5" /></S></TB>
    <TB className="-ml-[1px]"><S w={24} h={26}><path d="M4 2H18L22 6V24H4Z" fill="#f2f5fa" /><rect x="2" y="6" width="14" height="12" fill="#2d5fb0" /><text x="4" y="16" fontSize="11" fontWeight="700" fill="#fff" fontFamily="Liberation Sans">W</text><path d="M17 9H20M17 13H20M17 17H20" stroke="#5b82c0" /></S></TB>
    <TB className="ml-[1px]"><S w={24} h={22}><rect x="5" y="2" width="14" height="6" fill="#c8c8c8" /><rect x="2" y="8" width="20" height="10" rx="2" fill="#a8a8a8" /><rect x="5" y="12" width="14" height="7" fill="#ececec" /></S></TB>
    <TB><S w={24} h={28}><path d="M8 7C8 1 16 1 16 7" fill="none" stroke="#2a8fd0" strokeWidth="1.6" /><rect x="3" y="6" width="18" height="20" rx="2" fill="#f2f2f2" /><rect x="8" y="12" width="3.5" height="3.5" fill="#e8502a" /><rect x="12.5" y="12" width="3.5" height="3.5" fill="#7db83a" /><rect x="8" y="16.5" width="3.5" height="3.5" fill="#2a9ae0" /><rect x="12.5" y="16.5" width="3.5" height="3.5" fill="#f5b81f" /></S></TB>
    <TB><S w={24} h={24}><circle cx="12" cy="12" r="11" fill="#1ed760" /><path d="M6 9C10 7.5 14 8 18 10M6.5 12.5C10 11.2 14 11.7 17 13.3M7 16C10 15 13 15.3 16 16.7" stroke="#111" strokeWidth="1.7" fill="none" strokeLinecap="round" /></S></TB>
    <TB className="-ml-[1px]"><S w={24} h={26}><path d="M11 6C5 6 2 10 2 15C2 20 6 23 10 23C13 23 13 20 12 18C11 16 14 15 16 15C19 15 20 13 19 10C18 8 15 6 11 6Z" fill="#b9c8d4" /><circle cx="7" cy="12" r="1.7" fill="#3a8fd0" /><circle cx="11" cy="10" r="1.7" fill="#e85050" /><circle cx="6" cy="17" r="1.7" fill="#5cb85c" /><path d="M15 20L21 2" stroke="#d89030" strokeWidth="2.2" /></S></TB>
    <TB className="ml-[1px]"><S w={24} h={24}><path d="M2 4H10L12 6H22V22H2Z" fill="#f0c040" /><rect x="2" y="9" width="20" height="13" fill="#f5d468" /><rect x="8" y="16" width="8" height="6" fill="#3a8fd8" /></S></TB>
    <TB><S w={24} h={28}><circle cx="12" cy="14" r="10.5" fill="#0a9ae0" /><circle cx="7" cy="7" r="5" fill="#0a9ae0" /><circle cx="17" cy="21" r="5" fill="#0a9ae0" /><text x="7.5" y="20" fontSize="16" fontWeight="700" fill="#fff" fontFamily="Liberation Sans">S</text></S></TB>
    <TB><S w={20} h={28}><rect x="1" y="1" width="18" height="26" fill="#8b9aa3" /><rect x="3" y="3" width="14" height="6" fill="#3fb3e8" /><path d="M3 13H17M3 18H17M3 23H17" stroke="#d8e0e4" strokeWidth="3" strokeDasharray="3 2" /></S></TB>
    <TB><S w={26} h={26}>
      <circle cx="13" cy="13" r="12" fill="#e8453c" />
      <path d="M13 13L2.6 19A12 12 0 0 0 19 23.4Z" fill="#34a853" />
      <path d="M13 13L19 23.4A12 12 0 0 0 24.5 8H13Z" fill="#fbbc05" />
      <circle cx="13" cy="13" r="5.6" fill="#fff" /><circle cx="13" cy="13" r="4.4" fill="#4285f4" />
    </S></TB>
    <div className="ml-[2px] w-[40px] h-full shrink-0 flex items-center justify-center bg-[#2c2c2c]"><S w={22} h={30}>
      <path d="M16 1V28" stroke="#56c456" /><rect x="12.5" y="6" width="7" height="17" fill="#5fd85f" />
      <path d="M5.5 11V28" stroke="#c84848" /><rect x="2" y="13" width="7" height="11" fill="#e85050" />
    </S></div>
    <div className="flex-1" />
    <div className="w-[66px] shrink-0 flex flex-col items-center justify-center gap-[1px] leading-[16px]">
      <span>08:12</span>
      <span>21/04/2023</span>
    </div>
  </div>
);

export default function App() {
  return (
    <div className="w-[1800px] h-[1015px] flex flex-col overflow-hidden bg-white font-['Liberation_Sans',Arial,sans-serif]">
      <TopBar />
      <ToolBar />
      <div className="h-[3px] shrink-0 bg-[#c6d6dd]" />
      <BlueBar />
      <GainRow />
      <Chart />
      <Bottom />
      <Taskbar />
    </div>
  );
}
